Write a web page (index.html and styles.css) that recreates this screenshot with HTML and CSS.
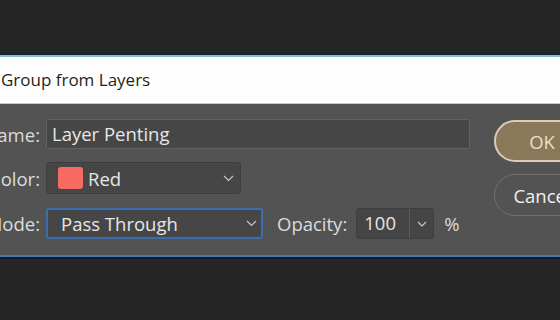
FILE: index.html
```html
<!DOCTYPE html>
<html lang="en">
<head>
    <meta charset="UTF-8">
    <title>New Group from Layers</title>
    <link rel="stylesheet" href="styles.css">
</head>
<body>
    <div class="dialog">
        <div class="title-bar">New Group from Layers</div>

        <div class="dialog-body">
            <div class="fields">
                <div class="row row-name">
                    <label class="label" for="name">Name:</label>
                    <div class="text-input" id="name">Layer Penting</div>
                </div>

                <div class="row row-color">
                    <span class="label">Color:</span>
                    <div class="select select-color">
                        <span class="swatch"></span>
                        <span class="select-text">Red</span>
                        <svg class="chevron" width="11" height="7" viewBox="0 0 11 7"><path d="M1 1 L5.5 5.5 L10 1" fill="none" stroke="#c8c8c8" stroke-width="1.2"/></svg>
                    </div>
                </div>

                <div class="row row-mode">
                    <span class="label">Mode:</span>
                    <div class="select select-mode">
                        <span class="select-text">Pass Through</span>
                        <svg class="chevron" width="11" height="7" viewBox="0 0 11 7"><path d="M1 1 L5.5 5.5 L10 1" fill="none" stroke="#c8c8c8" stroke-width="1.2"/></svg>
                    </div>
                    <span class="opacity-label">Opacity:</span>
                    <div class="opacity-box">
                        <span class="opacity-value">100</span>
                        <span class="opacity-drop">
                            <svg width="10" height="6" viewBox="0 0 10 6"><path d="M1 1 L5 5 L9 1" fill="none" stroke="#c8c8c8" stroke-width="1.2"/></svg>
                        </span>
                    </div>
                    <span class="percent">%</span>
                </div>
            </div>

            <div class="buttons">
                <button class="btn btn-ok">OK</button>
                <button class="btn btn-cancel">Cancel</button>
            </div>
        </div>
    </div>
</body>
</html>
```

FILE: styles.css
```css
* {
    margin: 0;
    padding: 0;
    box-sizing: border-box;
}

body {
    background-color: #252525;
    font-family: "Open Sans", "Noto Sans", sans-serif;
    padding-top: 53px;
    overflow: hidden;
    width: 560px;
    height: 320px;
}

.dialog {
    width: 720px;
    margin-left: -54px;
    border-top: 2px solid #16212b;
    border-bottom: 2px solid #4a78b0;
    box-shadow: 0 2px 0 #141b22;
}

.title-bar {
    background-color: #fefefe;
    border-top: 2px solid #7fbad8;
    border-bottom: 1px solid #c9c9c9;
    height: 49px;
    padding-left: 15px;
    font-size: 17px;
    line-height: 46px;
    color: #1e1e1e;
}

.dialog-body {
    background-color: #535353;
    display: flex;
    padding: 15px 0 16px 0;
    height: 151px;
}

.fields {
    display: flex;
    flex-direction: column;
    width: 524px;
}

.row {
    display: flex;
    align-items: center;
    gap: 6px;
}

.row-name {
    height: 30px;
}

.row-color {
    height: 32px;
    margin-top: 13px;
}

.row-mode {
    height: 31px;
    margin-top: 14px;
}

.label {
    width: 94px;
    text-align: right;
    font-size: 18.5px;
    color: #dcdcdc;
}

.text-input {
    width: 424px;
    height: 30px;
    background-color: #464646;
    border: 1px solid #616161;
    border-radius: 2px;
    padding-left: 5px;
    font-size: 18.5px;
    line-height: 28px;
    color: #e6e6e6;
}

.select {
    display: flex;
    align-items: center;
    height: 100%;
    background-color: #464646;
    border-radius: 3px;
    font-size: 18.5px;
    color: #e6e6e6;
}

.select-color {
    width: 195px;
    border: 1px solid #3d3d3d;
    padding-left: 11px;
}

.select-mode {
    width: 217px;
    border: 2px solid #3c6db0;
    padding-left: 13px;
}

.swatch {
    width: 25px;
    height: 22px;
    background-color: #f86b62;
    border-radius: 3px;
    margin-right: 5px;
}

.chevron {
    margin-left: auto;
    margin-right: 4px;
}

.select-color .chevron {
    margin-right: 6px;
}

.opacity-label {
    margin-left: 8px;
    font-size: 18.5px;
    color: #dcdcdc;
}

.opacity-box {
    display: flex;
    width: 78px;
    height: 31px;
    margin-left: 3px;
    background-color: #454545;
    border: 1px solid #3e3e3e;
    border-radius: 3px;
}

.opacity-value {
    width: 53px;
    padding-left: 7px;
    font-size: 18.5px;
    line-height: 28px;
    color: #e6e6e6;
    border-right: 1px solid #5c5c5c;
}

.opacity-drop {
    flex: 1;
    display: flex;
    align-items: center;
    justify-content: center;
}

.percent {
    margin-left: 4px;
    font-size: 18.5px;
    color: #dcdcdc;
}

.buttons {
    display: flex;
    flex-direction: column;
    gap: 12px;
    margin-left: 24px;
    padding-top: 1px;
}

.btn {
    width: 96px;
    height: 42px;
    border-radius: 21px;
    font-family: "Open Sans", "Noto Sans", sans-serif;
    font-size: 18.5px;
}

.btn-ok {
    background-color: #8b7759;
    border: 2px solid #dacdb5;
    color: #eadfcb;
}

.btn-cancel {
    background-color: transparent;
    border: 1px solid #717171;
    color: #f0f0f0;
}
```
